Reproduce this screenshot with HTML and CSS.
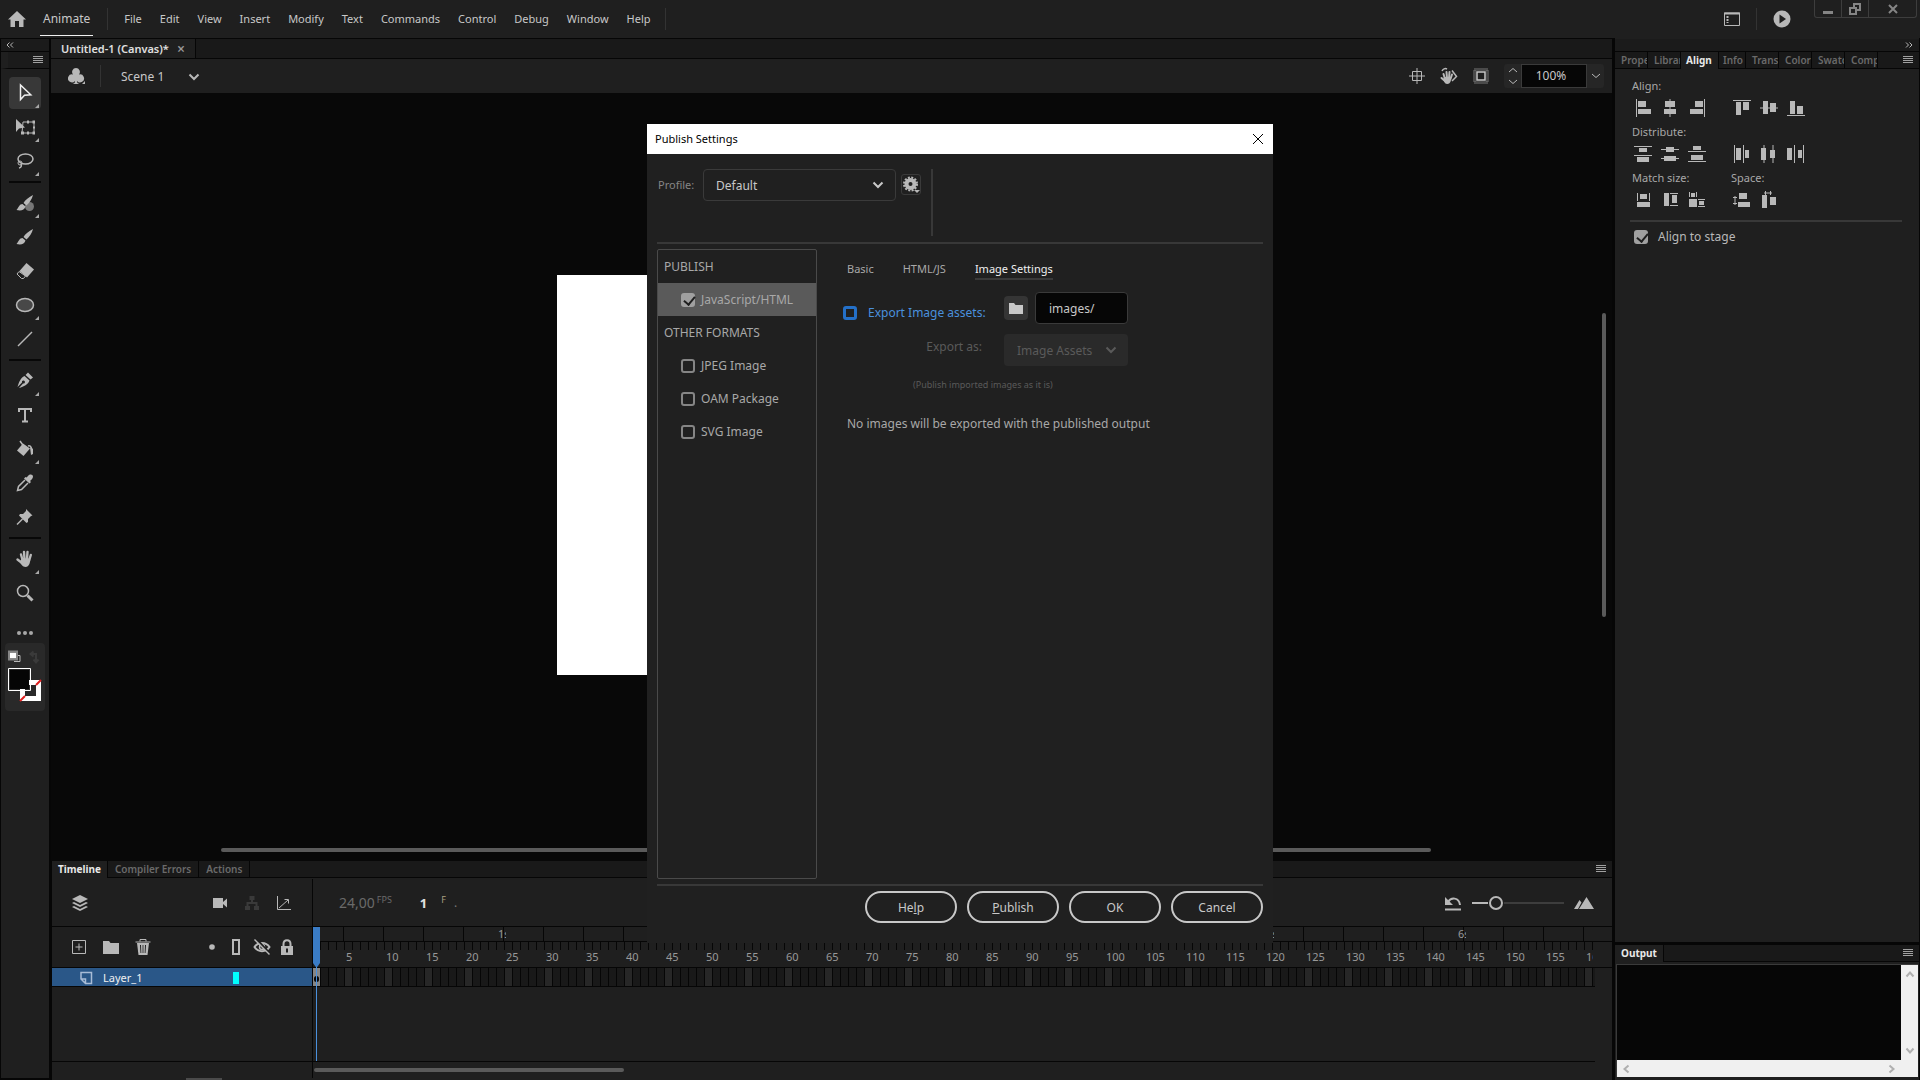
FILE: index.html
```html
<!DOCTYPE html>
<html lang="en">
<head>
    <meta charset="UTF-8">
    <title>Animate</title>
    <link rel="stylesheet" href="styles.css">
</head>
<body>
    <!-- Top bar -->
    <header class="topbar">
        <button class="icon-button" aria-label="Home">
            <svg width="20" height="18" viewBox="0 0 20 18"><path class="fill" d="M10 1 1 9.600h2.500V17h4.500v-6h4v6h4.500V9.600H19z"/></svg>
        </button>
        <button class="app-name">Animate</button>
        <span class="bar-line"></span>
        <nav class="menu">
            <button>File</button>
            <button>Edit</button>
            <button>View</button>
            <button>Insert</button>
            <button>Modify</button>
            <button>Text</button>
            <button>Commands</button>
            <button>Control</button>
            <button>Debug</button>
            <button>Window</button>
            <button>Help</button>
        </nav>
        <span class="bar-line"></span>
        <div class="topbar-right">
            <button class="icon-button" aria-label="Workspace">
                <svg width="16" height="14" viewBox="0 0 16 14"><path class="line" d="M.5 1h15v12.500H.5z"/><path class="line thick" d="M0 1.500h16"/><path class="line dots" d="M3.500 4v7"/></svg>
            </button>
            <span class="bar-line"></span>
            <button class="icon-button" aria-label="Test movie">
                <svg width="18" height="18" viewBox="0 0 18 18"><circle class="fill" cx="9" cy="9" r="8.500"/><path class="dark" d="M6.500 4.500 13 9l-6.500 4.500z"/></svg>
            </button>
        </div>
        <div class="window-buttons">
            <button aria-label="Minimize"><svg width="12" height="12" viewBox="0 0 12 12"><path class="grey" d="M1 8h10v3H1z"/></svg></button>
            <button aria-label="Restore"><svg width="12" height="12" viewBox="0 0 12 12"><path class="grey-line" d="M5 5V1h6v6H8M1 5h6v6H1z"/></svg></button>
            <button aria-label="Close"><svg width="12" height="12" viewBox="0 0 12 12"><path class="grey-line" d="m2 2 8 8M10 2l-8 8"/></svg></button>
        </div>
    </header>

    <!-- Tools -->
    <aside class="tools">
        <div class="collapse-strip left"><button aria-label="Collapse"><svg width="8" height="6" viewBox="0 0 8 6"><path class="line" d="M3.500.500 1 3l2.500 2.500M7 .5 4.500 3 7 5.500"/></svg></button></div>
        <div class="tools-tab"><button class="burger" aria-label="Panel menu"></button></div>
        <div class="tool-list">
            <div class="tool-group">
                <button class="tool more active" aria-label="Selection"><svg width="20" height="20" viewBox="0 0 20 20"><path class="white-line" d="M5.500 2v14.500l4-4.300 6.300-.4z"/></svg></button>
                <button class="tool more" aria-label="Free transform"><svg width="20" height="20" viewBox="0 0 20 20"><path class="line" d="M8 5h11v11H7z"/><path class="fill" d="M1 2v13l3-3.500 6-1zM17.500 3.500h2.500v3h-2.500zM17.500 14.500h2.500v3h-2.500zM6 14.500h3v3H6zM12 3.500h2v3h-2zM12 14.500h2v3h-2zM18 9.500h2v2h-2z"/></svg></button>
                <button class="tool more" aria-label="Lasso"><svg width="20" height="20" viewBox="0 0 20 20"><ellipse class="line mid" cx="10.500" cy="8" rx="7.500" ry="5"/><circle class="line" cx="5" cy="12" r="2"/><path class="line mid" d="M6 13c1 2 0 3.500-2 4"/></svg></button>
            </div>
            <div class="tool-group">
                <button class="tool more" aria-label="Fluid brush"><svg width="20" height="20" viewBox="0 0 20 20"><circle class="dim" cx="14.500" cy="13.500" r="4.500"/><path class="fill" d="M18 2c-4 2-8 5-9.500 8l3 2.500C14.500 10 17 6 18 2zM7.500 11c-3 0-3.500 3-6 6 4 1 8 .5 9-3.500z"/></svg></button>
                <button class="tool" aria-label="Brush"><svg width="20" height="20" viewBox="0 0 20 20"><path class="fill" d="M18 2c-4 2-8 5-9.500 8l3 2.500C14.500 10 17 6 18 2zM7.500 11c-3 0-3.500 3-6 6 4 1 8 .5 9-3.500z"/></svg></button>
                <button class="tool" aria-label="Eraser"><svg width="20" height="20" viewBox="0 0 20 20"><path class="fill" d="M11.500 2 19 8.500l-7 8L4.500 10z"/><path class="line" d="M4 10.500 2 13l4.500 4.500h2l2-2.500z"/></svg></button>
                <button class="tool more" aria-label="Oval"><svg width="20" height="20" viewBox="0 0 20 20"><ellipse class="oval" cx="10" cy="10" rx="8.500" ry="6.500"/></svg></button>
                <button class="tool" aria-label="Line"><svg width="20" height="20" viewBox="0 0 20 20"><path class="line mid" d="M3 17 17 3"/></svg></button>
            </div>
            <div class="tool-group">
                <button class="tool more" aria-label="Pen"><svg width="20" height="20" viewBox="0 0 20 20"><path class="fill" d="m13 1.500 5 5-2.500 2-5-4.500zM9.500 5l5 4.500c-1.500 4-5.500 6-10.500 7.500l4-4.500a1.500 1.500 0 1 0-1-1l-4.500 4.500C4 11 5.500 7 9.500 5z"/></svg></button>
                <button class="tool" aria-label="Text"><svg width="20" height="20" viewBox="0 0 20 20"><path class="line thick" d="M4 7V4h12v3M10 4v13M7 16.500h6"/></svg></button>
                <button class="tool more" aria-label="Paint bucket"><svg width="20" height="20" viewBox="0 0 20 20"><path class="fill" d="M8 4.500 15 9.500 8.500 17 2 11.500z"/><path class="line mid" d="m5 2 5 7M13 7c3-1 4 2 4 7"/><path class="fill" d="M15 8l3 2v5l-2 1z"/></svg></button>
                <button class="tool" aria-label="Eyedropper"><svg width="20" height="20" viewBox="0 0 20 20"><path class="fill" d="M13 3c2-2.500 5-1.500 5 .5s-1.500 3-3 4.500l1 1-1.500 1.500-5.500-5 1.500-1.500 1 .5z"/><path class="line mid" d="M10 7 3.500 13.500 2.500 17.500 6.500 16.500 13 10"/></svg></button>
                <button class="tool" aria-label="Asset warp"><svg width="20" height="20" viewBox="0 0 20 20"><path class="fill" d="m11 2 6.500 6.500-1.500.5-3 3v3L11.500 16 4 8.500 5 7h3l3-3z"/><path class="line mid" d="m7.500 12-5.500 5.500"/></svg></button>
            </div>
            <div class="tool-group">
                <button class="tool more" aria-label="Hand"><svg width="20" height="20" viewBox="0 0 20 20"><path class="hand" d="M6 5.500 7.500 11M9 3l.5 7M12.500 3 12 10M15.800 6 14 12M2.500 10.500 7 14"/><path class="fill" d="M6.500 9.500h8.500c.5 4-1 8.500-4.500 8.500-3 0-4.500-3-5.500-5z"/></svg></button>
                <button class="tool" aria-label="Zoom"><svg width="20" height="20" viewBox="0 0 20 20"><circle class="line mid" cx="8" cy="8" r="5.500"/><path class="line bold" d="m12.500 12.500 5 5"/></svg></button>
            </div>
            <button class="tool-dots" aria-label="Edit toolbar"><i></i><i></i><i></i></button>
            <div class="swatches">
                <svg width="36" height="64" viewBox="0 0 36 64">
                    <path class="line" d="M7.500 11.500H14v6H8"/><path class="white" d="M4 8.500h6v6H4z"/><path class="grey-line" d="M3 7.500h8v8H3z"/>
                    <path class="faint-line" d="M25 10h5v8M27.500 7.500 24.500 10l3 2.500M27.500 15.500l2.500 3 2.500-3"/>
                    <path class="white" fill-rule="evenodd" d="M14 36h21v21H14zM19 41v11h11V41z"/>
                    <path class="red-line" d="m14 57 5-5M30 41l5-5"/>
                    <path class="fill-swatch" d="M4 26h19v19H4z"/><path class="swatch-rim" d="M2.500 24.500h22v22h-22z"/>
                </svg>
            </div>
        </div>
    </aside>

    <!-- Document -->
    <main class="document">
        <div class="doc-tabs">
            <div class="doc-tab"><span>Untitled-1 (Canvas)*</span><button aria-label="Close document">×</button></div>
        </div>
        <div class="scene-bar">
            <button class="icon-button" aria-label="Symbols"><svg width="18" height="18" viewBox="0 0 18 18"><path class="fill" d="M8 1a4 4 0 0 1 3 6.500 4 4 0 1 1-2 6.500c0 1.500.5 2.500 2.500 3h-7C6.500 16.500 7 15.500 7 14a4 4 0 1 1-2-6.500A4 4 0 0 1 8 1zM17 14v3h-3z"/></svg></button>
            <span class="bar-line"></span>
            <button class="scene-name">Scene 1 <svg width="12" height="8" viewBox="0 0 12 8"><path class="line thick" d="m1.500 1.500 4.500 4.500 4.500-4.500"/></svg></button>
            <div class="view-buttons">
                <button class="icon-button" aria-label="Center stage"><svg width="16" height="16" viewBox="0 0 16 16"><path class="line" d="M3.500 3.500h9v9h-9zM8 0v16M0 8h16"/></svg></button>
                <button class="icon-button" aria-label="Rotate stage"><svg width="18" height="18" viewBox="0 0 18 18"><path class="hand thin" d="M3.500 7 5 12M6.500 5l.5 6M9.500 5 9 11M12 7.500 10.500 12M1.500 11 5 14"/><path class="fill" d="M4 10h7c.5 4-1 7-3.500 7S4.500 15.500 3.500 13z"/><path class="line mid" d="M2 4c1-2 3-3 5-2M12 3.500l4.500 6L12 14"/></svg></button>
                <button class="icon-button" aria-label="Clip content"><svg width="16" height="16" viewBox="0 0 16 16"><path class="dotted" d="M1.500 1.500h13v13h-13z"/><path class="clip" d="M4 4h8v8H4z"/></svg></button>
                <div class="zoom">
                    <button class="stepper" aria-label="Zoom step"><svg width="10" height="18" viewBox="0 0 10 18"><path class="line" d="M1 5l4-3.500L9 5M1 13l4 3.500L9 13"/></svg></button>
                    <input type="text" value="100%" aria-label="Zoom">
                    <button class="zoom-drop" aria-label="Zoom levels"><svg width="10" height="6" viewBox="0 0 10 6"><path class="line" d="M1 1l4 3.500L9 1"/></svg></button>
                </div>
            </div>
        </div>
        <div class="canvas">
            <div class="canvas-row">
                <div class="stage"></div>
                <div class="v-scroll"></div>
            </div>
            <div class="h-scroll"></div>
        </div>

        <!-- Timeline -->
        <section class="timeline">
            <div class="panel-tabs">
                <button class="panel-tab active">Timeline</button>
                <button class="panel-tab">Compiler Errors</button>
                <button class="panel-tab">Actions</button>
                <button class="burger" aria-label="Panel menu"></button>
            </div>
            <div class="timeline-body">
                <div class="layers">
                    <div class="layer-tools">
                        <button class="icon-button" aria-label="Layers"><svg width="18" height="18" viewBox="0 0 18 18"><path class="fill" d="m9 1 8 4-8 4-8-4zM1 9l2-1 6 3 6-3 2 1-8 4zM1 13l2-1 6 3 6-3 2 1-8 4z"/></svg></button>
                        <span class="push"></span>
                        <button class="icon-button" aria-label="Camera"><svg width="18" height="18" viewBox="0 0 18 18"><path class="fill" d="M2 4h10v10H2zM12 8l4-3.500v9L12 10z"/></svg></button>
                        <button class="icon-button" aria-label="Layer parenting"><svg width="18" height="18" viewBox="0 0 18 18"><path class="faint" d="M6.500 2h5v4h-5zM2 12h5v4H2zM11 12h5v4h-5z"/><path class="faint-line" d="M9 6v3M4.500 12V9h9v3"/></svg></button>
                        <button class="icon-button" aria-label="Layer depth"><svg width="18" height="18" viewBox="0 0 18 18"><path class="line" d="M2.500 2v13.500H16M4 14l9-8M9.500 5.500h4v4"/></svg></button>
                    </div>
                    <div class="layer-head">
                        <button class="icon-button" aria-label="New layer"><svg width="18" height="18" viewBox="0 0 18 18"><path class="line" d="M2.500 2.500h13v13h-13zM9 5.500v7M5.500 9h7"/></svg></button>
                        <button class="icon-button" aria-label="New folder"><svg width="18" height="18" viewBox="0 0 18 18"><path class="fill" d="M1 3h6l1.500 2H17v11H1z"/></svg></button>
                        <button class="icon-button" aria-label="Delete"><svg width="18" height="18" viewBox="0 0 18 18"><path class="fill" fill-rule="evenodd" d="M3 5h12l-1.500 12h-9zM6 7l.5 8h.8L7 7zm2.600 0v8h.8V7zM11 7l-.3 8h.8L12 7z"/><path class="line" d="M1.500 4h15M6 3.500v-2h6v2"/></svg></button>
                        <span class="push"></span>
                        <button class="icon-button" aria-label="Highlight"><svg width="18" height="18" viewBox="0 0 18 18"><circle class="fill" cx="9" cy="9" r="2.800"/></svg></button>
                        <button class="icon-button" aria-label="Outlines"><svg width="18" height="18" viewBox="0 0 18 18"><path class="line thick" d="M5 2h6v14H5z"/></svg></button>
                        <button class="icon-button" aria-label="Hide layers"><svg width="18" height="18" viewBox="0 0 18 18"><path class="line thick" d="M1.500 9C5 3.500 13 3.500 16.500 9 13 14.500 5 14.500 1.500 9z"/><circle class="line mid" cx="9" cy="9" r="2.500"/><path class="dark-line" d="M3 .5 17 15.500"/><path class="line mid" d="m1.500 1.500 15 15"/></svg></button>
                        <button class="icon-button" aria-label="Lock layers"><svg width="18" height="18" viewBox="0 0 18 18"><path class="line thick" d="M5.500 9V6c0-5 7-5 7 0v3"/><path class="fill" fill-rule="evenodd" d="M3 8h12v9H3zM8 10.500v4h2v-4z"/></svg></button>
                    </div>
                    <div class="layer-row">
                        <svg width="14" height="14" viewBox="0 0 14 14"><path class="layer-line" d="M2 1.500h10.500v11H6.500L2 8zM2 8h4.500v4"/></svg>
                        <span>Layer_1</span>
                        <i class="layer-color"></i>
                    </div>
                    <div class="layer-space"></div>
                    <div class="layer-foot"></div>
                </div>
                <div class="frames">
                    <div class="frame-tools">
                        <span class="fps">24,00</span><sup>FPS</sup>
                        <b class="frame-number">1</b><sup class="frame-unit">F</sup><span class="frame-dot">.</span>
                        <div class="timeline-zoom">
                            <button class="icon-button" aria-label="Reset zoom"><svg width="18" height="18" viewBox="0 0 18 18"><path class="line thick" d="M1 15.500h16M4 8c3-5 11-5 12 3"/><path class="fill" d="M1 3v8h8z"/></svg></button>
                            <input type="range" min="0" max="100" value="22" aria-label="Timeline zoom">
                            <button class="icon-button" aria-label="Fit timeline"><svg width="20" height="14" viewBox="0 0 20 14"><path class="fill" d="M0 13 5.500 4l2 2.500L4 13zM5 13l7.500-12L20 13z"/></svg></button>
                        </div>
                    </div>
                    <div class="seconds" id="seconds"></div>
                    <div class="ticks"></div>
                    <div class="numbers" id="numbers"></div>
                    <div class="frame-row"><span class="keyframe"></span></div>
                    <div class="frame-space"></div>
                    <div class="frame-foot"><div class="frame-scroll"></div></div>
                    <svg class="playhead" width="7" height="134" viewBox="0 0 7 134"><path class="head" d="M0 0h7v36l-3.500 5-3.500-5z"/><path class="head-line" d="M3.500 40v94"/></svg>
                </div>
            </div>
            <div class="bottom-grip"></div>
        </section>
    </main>

    <!-- Right side panels -->
    <aside class="side">
        <section class="align-panel">
            <div class="collapse-strip right"><button aria-label="Collapse"><svg width="8" height="6" viewBox="0 0 8 6"><path class="line" d="M1 .5 3.500 3 1 5.500M4.500.500 7 3 4.500 5.500"/></svg></button></div>
            <div class="panel-tabs side-tabs">
                <button class="panel-tab">Prope</button>
                <button class="panel-tab">Librar</button>
                <button class="panel-tab active">Align</button>
                <button class="panel-tab info">Info</button>
                <button class="panel-tab">Trans</button>
                <button class="panel-tab">Color</button>
                <button class="panel-tab">Swatc</button>
                <button class="panel-tab">Comp</button>
                <button class="burger" aria-label="Panel menu"></button>
            </div>
            <div class="align-body">
                <div class="align-cell wide">
                    <h3>Align:</h3>
                    <div class="align-icons">
                        <button aria-label="Align left"><svg width="18" height="18" viewBox="0 0 18 18"><path class="fill" d="M2 0h1v18H2zM4 2h8v6H4zM4 10h13v5H4z"/></svg></button>
                        <button aria-label="Align center"><svg width="18" height="18" viewBox="0 0 18 18"><path class="fill" d="M8.500 0h1v18h-1zM4 2h10v6H4zM3 10h12v5H3z"/></svg></button>
                        <button aria-label="Align right"><svg width="18" height="18" viewBox="0 0 18 18"><path class="fill" d="M16 0h1v18h-1zM7 2h8v6H7zM2 10h13v5H2z"/></svg></button>
                    </div>
                    <div class="align-icons">
                        <button aria-label="Align top"><svg width="18" height="18" viewBox="0 0 18 18"><path class="fill" d="M0 1h18v1H0zM3 3h5v13H3zM10 3h6v8h-6z"/></svg></button>
                        <button aria-label="Align middle"><svg width="18" height="18" viewBox="0 0 18 18"><path class="fill" d="M0 8.500h18v1H0zM3 2h5v13H3zM10 4h6v9h-6z"/></svg></button>
                        <button aria-label="Align bottom"><svg width="18" height="18" viewBox="0 0 18 18"><path class="fill" d="M0 16h18v1H0zM3 2h5v13H3zM10 7h6v8h-6z"/></svg></button>
                    </div>
                </div>
                <div class="align-cell wide">
                    <h3>Distribute:</h3>
                    <div class="align-icons">
                        <button aria-label="Distribute top"><svg width="18" height="18" viewBox="0 0 18 18"><path class="fill" d="M0 1h18v1H0zM5 3h8v4H5zM0 10h18v1H0zM3 12h12v5H3z"/></svg></button>
                        <button aria-label="Distribute vertical center"><svg width="18" height="18" viewBox="0 0 18 18"><path class="fill" d="M0 4h18v1H0zM5 2h8v5H5zM0 13h18v1H0zM3 11h12v5H3z"/></svg></button>
                        <button aria-label="Distribute bottom"><svg width="18" height="18" viewBox="0 0 18 18"><path class="fill" d="M0 6h18v1H0zM5 1h8v4H5zM0 16h18v1H0zM3 10h12v5H3z"/></svg></button>
                    </div>
                    <div class="align-icons">
                        <button aria-label="Distribute left"><svg width="18" height="18" viewBox="0 0 18 18"><path class="fill" d="M1 0h1v18H1zM3 3h5v12H3zM10 0h1v18h-1zM12 5h4v8h-4z"/></svg></button>
                        <button aria-label="Distribute horizontal center"><svg width="18" height="18" viewBox="0 0 18 18"><path class="fill" d="M3.500 0h1v18h-1zM1 3h5v12H1zM12.500 0h1v18h-1zM10 5h5v8h-5z"/></svg></button>
                        <button aria-label="Distribute right"><svg width="18" height="18" viewBox="0 0 18 18"><path class="fill" d="M7 0h1v18H7zM0 3h5v12H0zM16 0h1v18h-1zM11 5h4v8h-4z"/></svg></button>
                    </div>
                </div>
                <div class="align-cell">
                    <h3>Match size:</h3>
                    <div class="align-icons">
                        <button aria-label="Match width"><svg width="18" height="18" viewBox="0 0 18 18"><path class="fill" d="M3 2h1v8H3zM15 2h1v8h-1zM6 3h7v5H6zM3 11h13v5H3z"/></svg></button>
                        <button aria-label="Match height"><svg width="18" height="18" viewBox="0 0 18 18"><path class="fill" d="M3 2h5v13H3zM9 2h8v1H9zM11 4h5v8h-5zM9 14h8v1H9z"/></svg></button>
                        <button aria-label="Match width and height"><svg width="18" height="18" viewBox="0 0 18 18"><path class="fill" d="M1 1h1v5H1zM3 2h4v4H3zM8 1h1v5H8zM1 8h8v8H1zM10 8h7v1h-7zM11 10h5v4h-5zM10 15h7v1h-7z"/></svg></button>
                    </div>
                </div>
                <div class="align-cell">
                    <h3>Space:</h3>
                    <div class="align-icons">
                        <button aria-label="Space vertically"><svg width="18" height="18" viewBox="0 0 18 18"><path class="fill" d="M0 6h4v1H0zM0 12h4v1H0zM1.500 5h1v9h-1zM6 2h8v6H6zM5 11h12v5H5z"/></svg></button>
                        <button aria-label="Space horizontally"><svg width="18" height="18" viewBox="0 0 18 18"><path class="fill" d="M2 4h5v13H2zM10 6h6v8h-6zM5 0h1v4H5zM10 0h1v4h-1zM4 1.500h8v1H4z"/></svg></button>
                    </div>
                </div>
            </div>
            <label class="to-stage"><input type="checkbox" class="check" checked>Align to stage</label>
        </section>
        <section class="output-panel">
            <div class="panel-tabs">
                <button class="panel-tab active">Output</button>
                <button class="burger" aria-label="Panel menu"></button>
            </div>
            <div class="output-box">
                <textarea aria-label="Output"></textarea>
                <div class="output-v">
                    <svg width="10" height="8" viewBox="0 0 10 8"><path class="scroll-line" d="m1.500 6.500 3.500-4 3.500 4"/></svg>
                    <svg width="10" height="8" viewBox="0 0 10 8"><path class="scroll-line" d="m1.500 1.500 3.500 4 3.500-4"/></svg>
                </div>
                <div class="output-h">
                    <svg width="8" height="10" viewBox="0 0 8 10"><path class="scroll-line" d="m6.500 1.500-4 3.500 4 3.500"/></svg>
                    <svg width="8" height="10" viewBox="0 0 8 10"><path class="scroll-line" d="m1.500 1.500 4 3.500-4 3.500"/></svg>
                </div>
            </div>
        </section>
    </aside>

    <!-- Publish settings dialog -->
    <div class="dialog" role="dialog" aria-labelledby="dialog-title">
        <div class="dialog-title">
            <span id="dialog-title">Publish Settings</span>
            <button aria-label="Close dialog"><svg width="12" height="12" viewBox="0 0 12 12"><path d="m1 1 10 10M11 1 1 11"/></svg></button>
        </div>
        <div class="profile">
            <label for="profile">Profile:</label>
            <select id="profile"><option>Default</option></select>
            <button class="gear" aria-label="Profile options"><svg width="18" height="18" viewBox="0 0 18 18"><circle class="gear-ring" cx="8.500" cy="8" r="4"/><circle class="gear-teeth" cx="8.500" cy="8" r="6.500"/><path class="fill" d="M12 14h6l-3 3z"/></svg></button>
        </div>
        <div class="dialog-main">
            <div class="formats">
                <h4>PUBLISH</h4>
                <label class="selected"><input type="checkbox" class="check" checked>JavaScript/HTML</label>
                <h4>OTHER FORMATS</h4>
                <label><input type="checkbox" class="check">JPEG Image</label>
                <label><input type="checkbox" class="check">OAM Package</label>
                <label><input type="checkbox" class="check">SVG Image</label>
            </div>
            <div class="settings">
                <div class="settings-tabs">
                    <button>Basic</button>
                    <button>HTML/JS</button>
                    <button class="active">Image Settings</button>
                </div>
                <div class="export-grid">
                    <label class="export-assets"><input type="checkbox" class="check">Export Image assets:</label>
                    <div class="export-path">
                        <button class="folder" aria-label="Browse"><svg width="16" height="14" viewBox="0 0 16 14"><path d="M1 2h5l1.500 2H15v9H1z"/></svg></button>
                        <input type="text" value="images/" aria-label="Image folder">
                    </div>
                    <label class="export-as" for="export-as">Export as:</label>
                    <select id="export-as" disabled><option>Image Assets</option></select>
                </div>
                <p class="note">(Publish imported images as it is)</p>
                <p class="message">No images will be exported with the published output</p>
            </div>
        </div>
        <div class="dialog-buttons">
            <button>He<u>l</u>p</button>
            <button><u>P</u>ublish</button>
            <button>OK</button>
            <button>Cancel</button>
        </div>
    </div>

    <script>
        // Frame numbers every 5 frames
        const numbers = document.getElementById("numbers");
        for (let i = 5; i <= 160; i += 5) {
            const span = document.createElement("span");
            span.textContent = i;
            numbers.appendChild(span);
        }

        // Second marks every 24 frames
        const seconds = document.getElementById("seconds");
        for (let i = 1; i <= 6; i++) {
            const span = document.createElement("span");
            span.textContent = i + "s";
            seconds.appendChild(span);
        }
    </script>
</body>
</html>
```

FILE: styles.css
```css
* {
    box-sizing: border-box;
}

body {
    margin: 0;
    height: 100vh;
    overflow: hidden;
    display: grid;
    grid-template-columns: 51px 1fr 305px;
    grid-template-rows: 38px 1fr;
    background-color: #060606;
    color: #c8c8c8;
    font-family: "Noto Sans", sans-serif;
    font-size: 12px;
    line-height: 16px;
}

button, input, select, textarea {
    font: inherit;
    color: inherit;
    background: none;
    border: none;
    padding: 0;
    margin: 0;
}

h3, h4, p {
    margin: 0;
    font-size: 12px;
    font-weight: normal;
}

svg {
    display: block;
    fill: none;
}

/* Icon colors */
.fill { fill: #b8b8b8; }
.dark { fill: #1f1f1f; }
.white { fill: #fff; }
.grey { fill: #858585; }
.dim { fill: #777; }
.faint { fill: #3a3a3a; }
.line { stroke: #b8b8b8; }
.mid { stroke-width: 1.5; }
.thick { stroke-width: 2; }
.bold { stroke-width: 3; }
.dots { stroke-width: 2; stroke-dasharray: 2 1; }
.white-line { stroke: #f0f0f0; stroke-width: 1.5; }
.grey-line { stroke: #858585; stroke-width: 2; }
.faint-line { stroke: #3a3a3a; stroke-width: 2; }
.dark-line { stroke: #1f1f1f; stroke-width: 2; }
.red-line { stroke: #e02020; stroke-width: 2; }
.oval { fill: #484848; stroke: #b8b8b8; stroke-width: 1.5; }
.hand { stroke: #b8b8b8; stroke-width: 2.4; stroke-linecap: round; }
.hand.thin { stroke-width: 2; }
.dotted { stroke: #777; stroke-width: 3; stroke-dasharray: 1 1; }
.clip { fill: #1f1f1f; stroke: #c8c8c8; stroke-width: 1.5; }
.fill-swatch { fill: #050505; }
.swatch-rim { stroke: #fff; }
.layer-line { stroke: #a8bcd6; stroke-width: 1.5; }
.scroll-line { stroke: #b0b0b0; stroke-width: 2; }

/* Top bar */
.topbar {
    grid-column: 1 / -1;
    display: flex;
    align-items: flex-start;
    padding-left: 7px;
    background-color: #1f1f1f;
}

.topbar > .icon-button {
    height: 38px;
}

.app-name {
    height: 36px;
    margin-left: 13px;
    padding: 2px 3px 0;
    border-bottom: 1px solid #f0f0f0;
    font-size: 12px;
}

.bar-line {
    width: 1px;
    height: 22px;
    background-color: #333;
}

.topbar > .bar-line {
    margin: 8px 16px 0 14px;
}

.menu {
    display: flex;
    gap: 18px;
    height: 38px;
    font-size: 11px;
}

.topbar-right {
    display: flex;
    align-items: center;
    gap: 16px;
    height: 38px;
    margin-left: auto;
}

.window-buttons {
    display: flex;
    height: 18px;
    margin: 0 3px 0 23px;
    border: 1px solid #3d3d3d;
    border-top: none;
    border-radius: 0 0 3px 3px;
}

.window-buttons button {
    display: flex;
    justify-content: center;
    align-items: center;
    width: 27px;
    border-right: 1px solid #3d3d3d;
}

.window-buttons button:last-child {
    width: 47px;
    border-right: none;
}

/* Tools */
.collapse-strip {
    display: flex;
    align-items: center;
    height: 12px;
    margin-top: 1px;
    background-color: #1b1b1b;
}

.collapse-strip.left { padding-left: 5px; }

.collapse-strip.right {
    justify-content: flex-end;
    padding-right: 6px;
}

.burger {
    width: 10px;
    height: 8px;
    background: repeating-linear-gradient(#a0a0a0 0 1px, transparent 1px 2px);
}

.tools {
    display: flex;
    flex-direction: column;
    padding: 0 2px 2px 1px;
}

.tools-tab {
    display: flex;
    justify-content: flex-end;
    align-items: center;
    height: 17px;
    margin-top: 1px;
    padding-right: 6px;
    border-left: 7px solid #1f1f1f;
    border-bottom: 1px solid #060606;
    background-color: #1b1b1b;
}

.tool-list {
    flex: 1;
    display: flex;
    flex-direction: column;
    align-items: center;
    padding-top: 8px;
    background-color: #1f1f1f;
}

.tool-group {
    display: flex;
    flex-direction: column;
    gap: 2px;
}

.tool-group + .tool-group::before {
    content: "";
    height: 2px;
    margin: 4px 0 2px;
    background-color: #080808;
}

.tool {
    position: relative;
    display: flex;
    justify-content: center;
    align-items: center;
    width: 32px;
    height: 32px;
    border-radius: 4px;
}

.tool.active {
    background-color: #383838;
}

.tool.more::after {
    content: "";
    position: absolute;
    right: 2px;
    bottom: 1px;
    border: 2px solid transparent;
    border-right-color: #a8a8a8;
    border-bottom-color: #a8a8a8;
}

.tool-dots {
    display: flex;
    gap: 2px;
    padding: 22px 0 8px;
}

.tool-dots i {
    width: 4px;
    height: 4px;
    border-radius: 2px;
    background-color: #a8a8a8;
}

.swatches {
    width: 40px;
    height: 68px;
    padding: 1px;
    border-radius: 4px;
    background-color: #292929;
}

/* Document */
.document {
    display: flex;
    flex-direction: column;
    min-width: 0;
    padding-right: 3px;
}

.doc-tabs {
    display: flex;
    height: 19px;
    margin-top: 1px;
    margin-bottom: 1px;
    background-color: #191919;
}

.doc-tab {
    display: flex;
    align-items: center;
    gap: 8px;
    padding: 0 10px;
    border-right: 1px solid #060606;
    background-color: #1f1f1f;
    color: #e0e0e0;
    font-size: 11px;
    font-weight: 600;
}

.doc-tab button {
    color: #999;
    font-size: 14px;
}

.scene-bar {
    display: flex;
    align-items: center;
    height: 34px;
    padding: 0 8px 0 17px;
    background-color: #1f1f1f;
}

.scene-bar > .bar-line {
    margin: 0 20px 0 14px;
}

.scene-name {
    display: flex;
    align-items: center;
    gap: 24px;
    padding-top: 1px;
}

.view-buttons {
    display: flex;
    align-items: center;
    gap: 15px;
    margin-left: auto;
}

.zoom {
    display: flex;
    height: 24px;
    border-radius: 3px;
    background-color: #262626;
}

.zoom input {
    width: 66px;
    padding-right: 6px;
    border: 1px solid #3a3a3a;
    background-color: #060606;
    text-align: center;
}

.zoom button {
    display: flex;
    justify-content: center;
    align-items: center;
    width: 17px;
}

/* Canvas */
.canvas {
    flex: 1;
    display: flex;
    flex-direction: column;
    background-color: #080808;
}

.canvas-row {
    flex: 1;
    display: flex;
    justify-content: center;
    align-items: center;
    position: relative;
    padding-top: 9px;
}

.stage {
    width: 550px;
    height: 400px;
    background-color: #fff;
}

.v-scroll {
    position: absolute;
    right: 6px;
    top: 220px;
    width: 4px;
    height: 304px;
    border-radius: 2px;
    background-color: #5a5a5a;
}

.h-scroll {
    height: 4px;
    margin: 0 181px 9px 170px;
    border-radius: 2px;
    background-color: #5a5a5a;
}

/* Panels */
.panel-tabs {
    display: flex;
    height: 17px;
    border-bottom: 1px solid #060606;
    background-color: #191919;
}

.panel-tab {
    padding: 0 7px;
    border-right: 1px solid #060606;
    color: #6a6a6a;
    font-size: 10px;
    line-height: 16px;
    font-weight: 600;
    white-space: nowrap;
}

.panel-tab.active {
    height: 17px;
    padding: 0 6px 1px;
    background-color: #1f1f1f;
    color: #e8e8e8;
    font-weight: bold;
}

.panel-tabs .burger {
    align-self: center;
    margin: 0 6px 0 auto;
}

/* Timeline */
.timeline {
    display: flex;
    flex-direction: column;
    margin-left: 1px;
    background-color: #1f1f1f;
}

.timeline-body {
    display: flex;
    margin-top: 1px;
}

.layers {
    display: flex;
    flex-direction: column;
    width: 261px;
    border-right: 1px solid #060606;
}

.layer-tools, .layer-head {
    display: flex;
    align-items: center;
    border-bottom: 1px solid #060606;
}

.layer-tools {
    gap: 14px;
    height: 48px;
    padding: 0 19px;
}

.layer-head {
    gap: 7px;
    height: 41px;
    padding: 0 16px 0 18px;
}

.layer-head .icon-button:nth-child(-n+3) {
    margin-right: 7px;
}

.push {
    flex: 1;
}

.layer-row {
    display: flex;
    align-items: center;
    gap: 10px;
    height: 19px;
    padding: 1px 73px 0 27px;
    border-bottom: 1px solid #060606;
    background-color: #2a5788;
    color: #f0f0f0;
    font-size: 11px;
}

.layer-color {
    width: 6px;
    height: 12px;
    margin-left: auto;
    background-color: #00ffff;
}

.layer-space, .frame-space {
    height: 75px;
    border-bottom: 1px solid #060606;
}

.layer-foot, .frame-foot {
    height: 16px;
}

.frames {
    position: relative;
    flex: 1;
    min-width: 0;
}

.frame-tools {
    display: flex;
    align-items: center;
    height: 48px;
    padding: 0 18px 0 26px;
    border-bottom: 1px solid #060606;
}

.frame-tools sup {
    align-self: flex-start;
    margin: 13px 0 0 2px;
    color: #6a6a6a;
    font-size: 9px;
}

.fps {
    color: #6a6a6a;
    font-size: 14px;
}

.frame-number {
    margin-left: 28px;
    color: #e0e0e0;
    font-size: 13px;
}

.frame-tools .frame-unit {
    margin-left: 14px;
    color: #a8a080;
}

.frame-dot {
    margin-left: 8px;
    color: #777;
}

.timeline-zoom {
    display: flex;
    align-items: center;
    gap: 10px;
    margin-left: auto;
}

.timeline-zoom input {
    appearance: none;
    width: 92px;
    height: 2px;
    background: linear-gradient(90deg, #b8b8b8 16px, #3d3d3d 16px);
}

.timeline-zoom input::-webkit-slider-thumb {
    appearance: none;
    width: 14px;
    height: 14px;
    border: 2px solid #b8b8b8;
    border-radius: 50%;
    background-color: #1f1f1f;
    box-shadow: 0 0 0 1px #1f1f1f;
}

.seconds {
    display: flex;
    height: 15px;
    padding-left: 185px;
    overflow: hidden;
    border-bottom: 1px solid #060606;
    background: repeating-linear-gradient(90deg, transparent 0 39px, #060606 39px 40px) -9px 0 / calc(100% + 9px) 100%;
    color: #999;
    font-size: 11px;
    line-height: 14px;
}

.seconds span {
    flex: 0 0 8px;
    margin-right: 184px;
    overflow: hidden;
}

.ticks {
    height: 8px;
    margin-right: 17px;
    background: repeating-linear-gradient(90deg, transparent 0 7px, #060606 7px 8px);
}

.numbers {
    display: flex;
    height: 18px;
    padding-left: 33px;
    border-bottom: 1px solid #060606;
    color: #999;
    font-size: 11px;
    line-height: 14px;
    overflow: hidden;
}

.numbers span {
    flex: 0 0 40px;
}

.numbers span:last-child {
    flex-basis: 7px;
    overflow: hidden;
}

.frame-row {
    height: 19px;
    margin-right: 17px;
    border-bottom: 1px solid #060606;
    background:
        repeating-linear-gradient(90deg, transparent 0 7px, #060606 7px 8px),
        repeating-linear-gradient(90deg, #191919 0 32px, #272727 32px 40px);
}

.keyframe {
    display: flex;
    justify-content: center;
    width: 7px;
    height: 18px;
    background-color: #858585;
}

.keyframe::after {
    content: "";
    width: 5px;
    height: 6px;
    margin-top: 8px;
    border-radius: 3px;
    background-color: #060606;
}

.frame-space {
    margin-right: 17px;
}

.frame-scroll {
    width: 310px;
    height: 4px;
    margin-left: 1px;
    border-radius: 2px;
    background-color: #5a5a5a;
}

.frame-foot {
    padding-top: 6px;
}

.playhead {
    position: absolute;
    left: 0;
    top: 48px;
}

.head { fill: #3a7cc6; }
.head-line { stroke: #4a90dd; }

.bottom-grip {
    width: 36px;
    height: 2px;
    margin-left: 134px;
    background-color: #4a4a4a;
}

/* Side panels */
.side {
    display: flex;
    flex-direction: column;
    gap: 3px;
    padding-right: 1px;
    min-width: 0;
}

.align-panel {
    flex: 1;
    background-color: #1f1f1f;
}

.side-tabs {
    height: 18px;
    border-top: 1px solid #060606;
}

.side-tabs .panel-tab {
    width: 33px;
    padding: 0 0 0 6px;
    text-align: left;
    overflow: hidden;
}

.side-tabs .panel-tab.active {
    width: 38px;
    padding: 0 5px 1px;
}

.side-tabs .panel-tab.info {
    width: 27px;
    padding-left: 4px;
}

.align-body {
    display: grid;
    grid-template-columns: 99px 1fr;
    row-gap: 7px;
    margin: 9px 17px 0 15px;
    padding-bottom: 11px;
    border-bottom: 2px solid #383838;
}

.align-cell {
    display: grid;
    grid-template-columns: 99px 1fr;
    row-gap: 6px;
}

.align-cell.wide, .align-cell h3 {
    grid-column: 1 / -1;
}

.align-cell h3 {
    padding-left: 2px;
    color: #a8a8a8;
    font-size: 11px;
    line-height: 16px;
}

.align-icons {
    display: flex;
    gap: 9px;
    padding-left: 4px;
}

.align-icons svg {
    margin-top: -1px;
}

.to-stage {
    display: flex;
    align-items: center;
    gap: 10px;
    margin: 7px 0 0 19px;
    color: #b8b8b8;
}

.check {
    flex: none;
    appearance: none;
    width: 14px;
    height: 14px;
    border: 2px solid #858585;
    border-radius: 3px;
}

.check:checked {
    border: none;
    background-color: #a0a0a0;
}

.check:checked::after {
    content: "";
    display: block;
    width: 5px;
    height: 9px;
    margin: 1px 0 0 5px;
    border: solid #1f1f1f;
    border-width: 0 2px 2px 0;
    transform: rotate(40deg);
}

.output-panel {
    background-color: #1f1f1f;
}

.output-box {
    display: grid;
    grid-template-columns: 1fr 17px;
    grid-template-rows: 95px 17px;
    margin: 2px 1px 3px 1px;
    border: 1px solid #3a3a3a;
    border-width: 1px 0 0 1px;
    background-color: #f0f0f0;
}

.output-box textarea {
    background-color: #060606;
    resize: none;
    overflow: hidden;
}

.output-v, .output-h {
    display: flex;
    justify-content: space-between;
    align-items: center;
    padding: 5px;
}

.output-v {
    flex-direction: column;
}

/* Dialog */
.dialog {
    position: fixed;
    left: 0;
    right: 0;
    top: 124px;
    width: 626px;
    margin: 0 auto;
    display: flex;
    flex-direction: column;
    background-color: #202020;
}

.dialog-title {
    display: flex;
    justify-content: space-between;
    align-items: center;
    height: 30px;
    padding: 0 9px 0 8px;
    background-color: #fff;
    color: #000;
    font-size: 11px;
}

.dialog-title path {
    stroke: #000;
}

.profile {
    display: flex;
    height: 90px;
    margin: 0 10px;
    padding-top: 15px;
    border-bottom: 2px solid #383838;
}

.profile label {
    width: 46px;
    padding-left: 1px;
    color: #858585;
    font-size: 11px;
    line-height: 32px;
}

.dialog select {
    appearance: none;
    height: 32px;
    padding-top: 1px;
    border-radius: 4px;
    background: url("data:image/svg+xml,%3Csvg xmlns='http://www.w3.org/2000/svg' width='12' height='8' fill='none' stroke='%23c8c8c8' stroke-width='2'%3E%3Cpath d='m1.500 1.500 4.500 4.500 4.500-4.500'/%3E%3C/svg%3E") no-repeat right 11px center;
}

.profile select {
    width: 193px;
    padding-left: 12px;
    border: 1px solid #3a3a3a;
}

.gear {
    display: flex;
    justify-content: center;
    align-items: center;
    width: 20px;
    height: 21px;
    margin: 5px 10px 0 5px;
    border: 1px solid #3a3a3a;
    border-radius: 3px;
}

.gear-ring { stroke: #b8b8b8; stroke-width: 4; }
.gear-teeth { stroke: #b8b8b8; stroke-width: 2; stroke-dasharray: 2 1.4; }

.profile::after {
    content: "";
    width: 2px;
    height: 67px;
    background-color: #383838;
}

.dialog-main {
    display: flex;
    margin: 5px 10px;
    height: 630px;
}

.formats {
    width: 160px;
    border: 1px solid #4a4a4a;
    border-radius: 2px;
}

.formats h4, .formats label {
    display: flex;
    align-items: center;
    height: 33px;
    padding-left: 6px;
    color: #a8a8a8;
}

.formats label {
    gap: 6px;
    padding-left: 23px;
}

.formats .selected {
    background-color: #5a5a5a;
}

.settings {
    flex: 1;
    padding: 12px 0 0 26px;
}

.settings-tabs {
    display: flex;
    gap: 29px;
    padding-left: 4px;
    font-size: 11px;
    color: #a8a8a8;
}

.settings-tabs button {
    padding-bottom: 1px;
    border-bottom: 2px solid transparent;
}

.settings-tabs .active {
    border-color: #3a3a3a;
    color: #f0f0f0;
}

.export-grid {
    display: grid;
    grid-template-columns: 139px 124px;
    column-gap: 22px;
    row-gap: 10px;
    margin-top: 12px;
}

.export-assets {
    display: flex;
    align-items: center;
    gap: 11px;
    padding-top: 10px;
    color: #4a90dd;
    white-space: nowrap;
}

.export-assets .check {
    border: 3px solid #2470c8;
}

.export-path {
    display: flex;
    align-items: center;
    gap: 7px;
}

.folder {
    display: flex;
    justify-content: center;
    align-items: center;
    width: 24px;
    height: 24px;
    border-radius: 4px;
    background-color: #353535;
}

.folder path { fill: #c8c8c8; }

.export-path input {
    width: 93px;
    height: 32px;
    padding-left: 13px;
    border: 1px solid #3a3a3a;
    border-radius: 4px;
    background-color: #060606;
}

.export-as {
    padding-top: 5px;
    color: #5a5a5a;
    text-align: right;
}

#export-as {
    padding-left: 13px;
    background-color: #2a2a2a;
    background-image: url("data:image/svg+xml,%3Csvg xmlns='http://www.w3.org/2000/svg' width='12' height='8' fill='none' stroke='%235a5a5a' stroke-width='2'%3E%3Cpath d='m1.500 1.500 4.500 4.500 4.500-4.500'/%3E%3C/svg%3E");
    color: #5a5a5a;
    opacity: 1;
}

.note {
    margin: 11px 0 0 70px;
    color: #5a5a5a;
    font-size: 9px;
}

.message {
    margin: 23px 0 0 4px;
    color: #a8a8a8;
}

.dialog-buttons {
    display: flex;
    justify-content: flex-end;
    gap: 10px;
    height: 59px;
    margin: 0 10px;
    padding-top: 5px;
    border-top: 2px solid #383838;
}

.dialog-buttons button {
    width: 92px;
    height: 32px;
    padding-top: 1px;
    border: 2px solid #c8c8c8;
    border-radius: 16px;
}
```
